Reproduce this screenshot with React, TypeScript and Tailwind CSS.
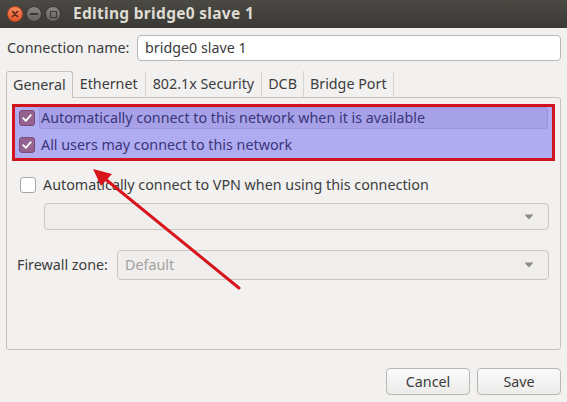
import React from "react";

const font = { fontFamily: '"Noto Sans", "Open Sans", sans-serif' };

function Check({ checked }: { checked: boolean }) {
  if (checked) {
    return (
      <div className="w-[16px] h-[16px] rounded-[3px] bg-[#95628f] border border-[#7a4a78] flex items-center justify-center shrink-0">
        <svg width="12" height="12" viewBox="0 0 12 12">
          <path d="M2.2 6.2 L4.8 8.8 L9.8 3.2" fill="none" stroke="#ffffff" strokeWidth="1.8" strokeLinecap="round" strokeLinejoin="round" />
        </svg>
      </div>
    );
  }
  return <div className="w-[16px] h-[16px] rounded-[3px] bg-white border border-[#a8a6a2] shrink-0" />;
}

function Caret() {
  return (
    <svg width="10" height="6" viewBox="0 0 10 6" className="shrink-0">
      <path d="M0.5 0.5 L9.5 0.5 L5 5.5 Z" fill="#8c8a86" />
    </svg>
  );
}

export default function App() {
  return (
    <div className="relative w-[567px] h-[402px] bg-[#f2f1f0] text-[#3c3c3c] text-[14.3px] flex flex-col overflow-hidden" style={font}>
      {/* Title bar */}
      <div className="h-[28px] bg-gradient-to-b from-[#4a4944] to-[#3a3935] flex items-center pl-[7px] shrink-0">
        <div className="w-[16px] h-[16px] rounded-full bg-gradient-to-b from-[#f58a5c] to-[#e3562a] border border-[#b8451f] flex items-center justify-center">
          <svg width="8" height="8" viewBox="0 0 8 8">
            <path d="M1.5 1.5 L6.5 6.5 M6.5 1.5 L1.5 6.5" stroke="#5a2412" strokeWidth="1.6" strokeLinecap="round" />
          </svg>
        </div>
        <div className="ml-[3px] w-[16px] h-[16px] rounded-full bg-gradient-to-b from-[#8a8882] to-[#62605b] border border-[#3a3935] flex items-center justify-center">
          <div className="w-[8px] h-[2px] bg-[#3a3935]" />
        </div>
        <div className="ml-[3px] w-[16px] h-[16px] rounded-full bg-gradient-to-b from-[#8a8882] to-[#62605b] border border-[#3a3935] flex items-center justify-center">
          <div className="w-[7px] h-[7px] border-[1.5px] border-[#3a3935]" />
        </div>
        <div className="ml-[12px] text-[15.5px] font-bold text-[#dfdbd2] tracking-[0.3px]">Editing bridge0 slave 1</div>
      </div>

      <div className="flex flex-col px-[6px] flex-1">
        {/* Connection name */}
        <div className="flex items-center mt-[7px] h-[26px]">
          <div className="pl-[1px]">Connection name:</div>
          <div className="ml-auto w-[424px] h-[26px] bg-white border border-[#b9b7b3] rounded-[4px] flex items-center px-[7px] text-[#3c3c3c]">
            bridge0 slave 1
          </div>
        </div>

        {/* Tabs */}
        <div className="flex items-end mt-[9px] h-[27px]">
          <div className="h-[27px] px-[6px] border border-b-0 border-[#c5c3c0] rounded-t-[3px] bg-[#f2f1f0] flex items-center relative z-10 -mb-px">General</div>
          <div className="h-[26px] px-[7px] flex items-center border-r border-[#d6d4d1]">Ethernet</div>
          <div className="h-[26px] px-[7px] flex items-center border-r border-[#d6d4d1]">802.1x Security</div>
          <div className="h-[26px] px-[6px] flex items-center border-r border-[#d6d4d1]">DCB</div>
          <div className="h-[26px] px-[6px] flex items-center border-r border-[#d6d4d1]">Bridge Port</div>
        </div>

        {/* Panel */}
        <div className="h-[253px] border border-[#c5c3c0] rounded-b-[3px] rounded-tr-[3px] flex flex-col">
          <div className="mt-[6px] mx-[5px] h-[57px] border-[3px] border-[#d2141e] bg-[#b0acf2] flex flex-col px-[4px]">
            <div className="flex items-center h-[22px]">
              <Check checked />
              <div className="ml-[4px] flex-1 h-[22px] rounded-[3px] bg-[#a7a2e8] border border-[#9a95da] flex items-center pl-[1px] text-[#3b3579]">
                Automatically connect to this network when it is available
              </div>
            </div>
            <div className="flex items-center h-[24px] mt-[4px]">
              <Check checked />
              <div className="ml-[6px] text-[#3b3579]">All users may connect to this network</div>
            </div>
          </div>

          <div className="flex items-center mt-[15px] ml-[13px] h-[18px]">
            <Check checked={false} />
            <div className="ml-[7px]">Automatically connect to VPN when using this connection</div>
          </div>

          <div className="ml-[37px] mr-[11px] mt-[9px] h-[27px] border border-[#c8c6c2] rounded-[4px] bg-[#efeeed] flex items-center justify-end pr-[14px]">
            <Caret />
          </div>

          <div className="flex items-center mt-[20px] ml-[10px] mr-[11px]">
            <div className="w-[100px]">Firewall zone:</div>
            <div className="ml-auto w-[432px] h-[30px] border border-[#c8c6c2] rounded-[4px] bg-[#efeeed] flex items-center pl-[7px] pr-[14px] text-[#a3a19d]">
              <span className="flex-1">Default</span>
              <Caret />
            </div>
          </div>
        </div>

        {/* Buttons */}
        <div className="flex justify-end gap-[7px] mt-[18px]">
          <div className="w-[84px] h-[27px] border border-[#b9b7b3] rounded-[4px] bg-gradient-to-b from-[#fafafa] to-[#ecebea] flex items-center justify-center">Cancel</div>
          <div className="w-[84px] h-[27px] border border-[#b9b7b3] rounded-[4px] bg-gradient-to-b from-[#fafafa] to-[#ecebea] flex items-center justify-center">Save</div>
        </div>
      </div>

      {/* Annotation arrow */}
      <svg className="absolute left-0 top-0 pointer-events-none" width="567" height="402" viewBox="0 0 567 402">
        <line x1="239" y1="288" x2="104" y2="178" stroke="#d8141c" strokeWidth="3" strokeLinecap="round" />
        <path d="M93 169 L112 174 L101 186 Z" fill="#d8141c" />
      </svg>
    </div>
  );
}
